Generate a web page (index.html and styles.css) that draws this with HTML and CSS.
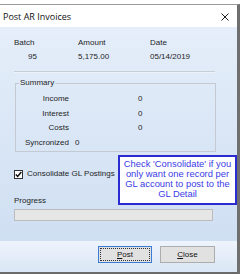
FILE: index.html
```html
<!DOCTYPE html>
<html>
<head>
<meta charset="utf-8">
<link rel="stylesheet" href="styles.css">
</head>
<body>
<div class="window">
  <div class="titlebar">
    <span class="title">Post AR Invoices</span>
    <svg class="close-x" width="8" height="8" viewBox="0 0 8 8"><path d="M0.5 0.5 L7.5 7.5 M7.5 0.5 L0.5 7.5" stroke="#222" stroke-width="1"/></svg>
  </div>
  <div class="client">
    <div class="head-grid">
      <span>Batch</span><span>Amount</span><span>Date</span>
      <span class="batch-val">95</span><span>5,175.00</span><span>05/14/2019</span>
    </div>
    <div class="sep"></div>
    <fieldset class="summary">
      <legend>Summary</legend>
      <div class="srow"><span class="slabel">Income</span><span class="sval">0</span></div>
      <div class="srow"><span class="slabel">Interest</span><span class="sval">0</span></div>
      <div class="srow"><span class="slabel">Costs</span><span class="sval">0</span></div>
      <div class="srow"><span class="slabel">Syncronized</span><span class="sval sync">0</span></div>
    </fieldset>
    <div class="check-row">
      <span class="cbox"><svg width="7" height="7" viewBox="0 0 7 7"><path d="M0.8 3.4 L2.7 5.4 L6.3 1" fill="none" stroke="#111" stroke-width="1.5"/></svg></span>
      <span>Consolidate GL Postings</span>
    </div>
    <div class="prog-label">Progress</div>
    <div class="progress"></div>
  </div>
  <div class="footer">
    <div class="btn btn-focus"><span class="focus-ring"><u>P</u>ost</span></div>
    <div class="btn"><span><u>C</u>lose</span></div>
  </div>
  <div class="tip">Check 'Consolidate' if you only want one record per GL account to post to the GL Detail</div>
</div>
</body>
</html>
```
FILE: styles.css
```css
html, body {
  margin: 0;
  padding: 0;
  background: #fff;
}
body {
  width: 245px;
  height: 279px;
  overflow: hidden;
  font-family: "Liberation Sans", Arial, sans-serif;
  font-size: 8px;
  color: #1e1e1e;
}
.window {
  position: relative;
  margin-top: 4px;
  width: 237px;
  border-top: 1px solid #9a9a9a;
  border-right: 3px solid #6f6f6f;
  border-bottom: 2px solid #6a6a6a;
}
.titlebar {
  height: 22px;
  background: #fff;
  display: flex;
  align-items: center;
  justify-content: space-between;
  padding: 0 8px 0 3px;
}
.title {
  font-family: "Open Sans", sans-serif;
  font-size: 9px;
  color: #111;
}
.close-x {
  display: block;
  margin-top: 1px;
}
.client {
  height: 214px;
  box-sizing: border-box;
  padding: 9px 22px 0 14px;
  background: linear-gradient(#e5eefa, #cfdff2);
}
.head-grid {
  display: grid;
  grid-template-columns: 64px 72px auto;
  line-height: 14px;
}
.batch-val {
  width: 23px;
  text-align: right;
}
.sep {
  margin-top: 7px;
  width: 201px;
  height: 1px;
  background: #c7ced6;
  border-bottom: 1px solid #eef3f9;
}
.summary {
  margin: 5px 0 0 1px;
  width: 201px;
  box-sizing: border-box;
  padding: 4px 0 1px 0;
  border: 1px solid #c3cad2;
}
.summary legend {
  margin-left: 3px;
  padding: 0 1px;
  line-height: 10px;
  font-size: 8px;
}
.srow {
  display: flex;
  height: 14.5px;
  line-height: 14.5px;
}
.slabel {
  width: 53px;
  text-align: right;
}
.sval {
  margin-left: 69px;
}
.sval.sync {
  margin-left: 6px;
}
.check-row {
  margin-top: 15px;
  display: flex;
  align-items: center;
  gap: 4px;
  line-height: 14px;
}
.cbox {
  width: 7px;
  height: 7px;
  border: 1px solid #333;
  background: #fff;
  display: flex;
  align-items: center;
  justify-content: center;
}
.cbox svg {
  display: block;
}
.prog-label {
  margin-top: 12.5px;
  line-height: 14px;
}
.progress {
  margin-top: 1.5px;
  width: 199px;
  height: 12px;
  box-sizing: border-box;
  border: 1px solid #bcbcbc;
  background: #e6e6e6;
}
.footer {
  height: 31px;
  box-sizing: border-box;
  padding: 5px 22px 0 0;
  display: flex;
  justify-content: flex-end;
  gap: 8px;
  background: linear-gradient(#eef4fc, #dae6f5);
}
.btn {
  width: 55px;
  height: 17px;
  box-sizing: border-box;
  border: 1px solid #adadad;
  background: #e1e1e1;
  display: flex;
  align-items: center;
  justify-content: center;
  color: #111;
}
.btn-focus {
  width: 54px;
  border: 1px solid #3a7bd5;
  padding: 1px;
}
.focus-ring {
  flex: 1;
  align-self: stretch;
  border: 1px dotted #333;
  display: flex;
  align-items: center;
  justify-content: center;
}
.tip {
  position: absolute;
  left: 118px;
  top: 150px;
  width: 119px;
  height: 50px;
  box-sizing: border-box;
  border: 2px solid #2b2bd2;
  background: #fff;
  padding: 2px 1px 0;
  font-family: "Liberation Sans", Arial, sans-serif;
  font-size: 9.4px;
  line-height: 10.1px;
  color: #3b3be6;
  text-align: center;
}
```
